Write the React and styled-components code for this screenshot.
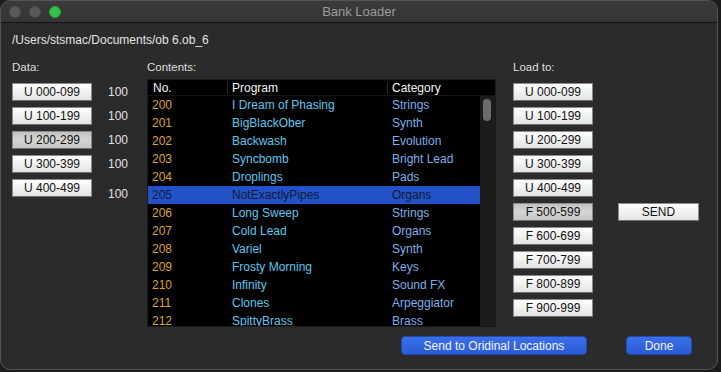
import React from "react";
import styled, { createGlobalStyle } from "styled-components";

const GlobalStyle = createGlobalStyle`
  html, body {
    margin: 0;
    padding: 0;
    background: #1c1c1c;
    font-family: "Liberation Sans", Arial, sans-serif;
  }
  * {
    box-sizing: border-box;
  }
`;

const programs = [
  ["200", "I Dream of Phasing", "Strings"],
  ["201", "BigBlackOber", "Synth"],
  ["202", "Backwash", "Evolution"],
  ["203", "Syncbomb", "Bright Lead"],
  ["204", "Droplings", "Pads"],
  ["205", "NotExactlyPipes", "Organs"],
  ["206", "Long Sweep", "Strings"],
  ["207", "Cold Lead", "Organs"],
  ["208", "Variel", "Synth"],
  ["209", "Frosty Morning", "Keys"],
  ["210", "Infinity", "Sound FX"],
  ["211", "Clones", "Arpeggiator"],
  ["212", "SpittyBrass", "Brass"],
];

const dataBanks = ["U 000-099", "U 100-199", "U 200-299", "U 300-399", "U 400-499"];
const loadBanks = [
  "U 000-099", "U 100-199", "U 200-299", "U 300-399", "U 400-499",
  "F 500-599", "F 600-699", "F 700-799", "F 800-899", "F 900-999",
];

const App = () => {
  const selected = "205";

  return (
    <>
      <GlobalStyle />
      <Window>
        <TitleBar>
          <Lights>
            <Light />
            <Light />
            <Light $green />
          </Lights>
          <Title>Bank Loader</Title>
          <span />
        </TitleBar>

        <Content>
          <Path>/Users/stsmac/Documents/ob 6.ob_6</Path>

          <Main>
            <DataColumn>
              <Label $gap={9}>Data:</Label>
              <Stack>
                {dataBanks.map((bank, i) => (
                  <DataRow key={bank}>
                    <BankButton $pressed={i === 2}>{bank}</BankButton>
                    <Count $drop={i === 4}>100</Count>
                  </DataRow>
                ))}
              </Stack>
            </DataColumn>

            <ContentsColumn>
              <Label $gap={5}>Contents:</Label>
              <List>
                <Header>
                  <HeadCell $first>No.</HeadCell>
                  <HeadCell $sep>Program</HeadCell>
                  <HeadCell $sep>Category</HeadCell>
                </Header>
                <ListBody>
                  <Rows>
                    {programs.map(([no, name, cat]) => {
                      const sel = no === selected;
                      return (
                        <Row key={no} $selected={sel}>
                          <Cell $first $color={sel ? "#0f1a33" : "#dba52f"}>{no}</Cell>
                          <Cell $color={sel ? "#0f1a33" : "#5cc7ec"}>{name}</Cell>
                          <Cell $color={sel ? "#0f1a33" : "#7eaeea"}>{cat}</Cell>
                        </Row>
                      );
                    })}
                  </Rows>
                  <ScrollTrack>
                    <ScrollThumb />
                  </ScrollTrack>
                </ListBody>
              </List>
            </ContentsColumn>

            <LoadColumn>
              <Label $gap={9}>Load to:</Label>
              <LoadGrid>
                {loadBanks.map((bank, i) => (
                  <BankButton key={bank} $pressed={i === 5} style={{ gridRow: i + 1 }}>
                    {bank}
                  </BankButton>
                ))}
                <SendButton>SEND</SendButton>
              </LoadGrid>
            </LoadColumn>
          </Main>

          <Footer>
            <BlueButton $width={186}>Send to Oridinal Locations</BlueButton>
            <BlueButton $width={66}>Done</BlueButton>
          </Footer>
        </Content>
      </Window>
    </>
  );
};

const Window = styled.div`
  width: 718px;
  height: 370px;
  background: #2b2b2b;
  border: 1px solid #555;
  border-radius: 10px;
  overflow: hidden;
  display: flex;
  flex-direction: column;
`;

const TitleBar = styled.div`
  height: 22px;
  background: linear-gradient(#3a3a3a, #353535);
  border-bottom: 1px solid #111;
  display: grid;
  grid-template-columns: 1fr auto 1fr;
  align-items: center;
`;

const Lights = styled.div`
  display: flex;
  gap: 8px;
  padding-left: 8px;
`;

const Light = styled.span`
  width: 12px;
  height: 12px;
  border-radius: 50%;
  background: ${(p) => (p.$green ? "#35c147" : "#5a5a5a")};
  border: 1px solid ${(p) => (p.$green ? "#2aa53b" : "#4d4d4d")};
`;

const Title = styled.div`
  font-size: 13px;
  color: #9b9b9b;
`;

const Content = styled.div`
  flex: 1;
  padding: 10px 0 0 11px;
  display: flex;
  flex-direction: column;
`;

const Path = styled.div`
  font-size: 12px;
  line-height: 14px;
  color: #e2e2e2;
`;

const Main = styled.div`
  display: flex;
  margin-top: 13px;
`;

const Label = styled.div`
  font-size: 11.5px;
  line-height: 14px;
  color: #dedede;
  margin-bottom: ${(p) => p.$gap}px;
`;

const DataColumn = styled.div`
  width: 135px;
  display: flex;
  flex-direction: column;
`;

const Stack = styled.div`
  display: flex;
  flex-direction: column;
  gap: 6px;
`;

const DataRow = styled.div`
  display: flex;
  align-items: flex-start;
`;

const BankButton = styled.button`
  width: 80px;
  height: 18px;
  padding: 0;
  font-family: "Liberation Sans", Arial, sans-serif;
  font-size: 12px;
  color: #111;
  border: 1px solid #8c8c8c;
  border-bottom-color: #707070;
  border-radius: 1px;
  background: ${(p) =>
    p.$pressed
      ? "linear-gradient(#c2c2c2, #d4d4d4 50%, #c6c6c6)"
      : "linear-gradient(#fdfdfd, #f1f1f1 50%, #e4e4e4)"};
  grid-column: 1;
`;

const Count = styled.span`
  font-size: 12px;
  line-height: 18px;
  color: #e2e2e2;
  margin-left: 16px;
  margin-top: ${(p) => (p.$drop ? "6px" : "0")};
`;

const ContentsColumn = styled.div`
  width: 349px;
  display: flex;
  flex-direction: column;
`;

const List = styled.div`
  height: 248px;
  background: #000;
  border: 1px solid #1a1a1a;
  display: flex;
  flex-direction: column;
  overflow: hidden;
`;

const Header = styled.div`
  height: 16px;
  flex-shrink: 0;
  display: grid;
  grid-template-columns: 79px 160px 1fr;
  align-items: center;
  border-bottom: 1px solid #161616;
`;

const HeadCell = styled.div`
  font-size: 12px;
  color: #f4f4f4;
  padding-left: ${(p) => (p.$first ? "4px" : "4px")};
  border-left: 1px solid ${(p) => (p.$sep ? "#2a2a2a" : "transparent")};
  line-height: 12px;
`;

const ListBody = styled.div`
  flex: 1;
  display: flex;
  min-height: 0;
`;

const Rows = styled.div`
  flex: 1;
  display: flex;
  flex-direction: column;
`;

const Row = styled.div`
  height: 18px;
  flex-shrink: 0;
  display: grid;
  grid-template-columns: 79px 160px 1fr;
  align-items: center;
  font-size: 12px;
  background: ${(p) => (p.$selected ? "#2352c8" : "transparent")};
`;

const Cell = styled.div`
  padding-left: ${(p) => (p.$first ? "4px" : "5px")};
  color: ${(p) => p.$color};
  white-space: nowrap;
`;

const ScrollTrack = styled.div`
  width: 15px;
  background: #1c1c1c;
  padding: 3px 0 0 3px;
`;

const ScrollThumb = styled.div`
  width: 8px;
  height: 22px;
  border-radius: 4px;
  background: #6c6c6c;
`;

const LoadColumn = styled.div`
  margin-left: 17px;
  display: flex;
  flex-direction: column;
`;

const LoadGrid = styled.div`
  display: grid;
  grid-template-columns: 80px 81px;
  column-gap: 25px;
  row-gap: 6px;
`;

const SendButton = styled(BankButton)`
  width: 81px;
  grid-column: 2;
  grid-row: 6;
`;

const Footer = styled.div`
  display: flex;
  justify-content: flex-end;
  gap: 39px;
  margin-top: 9px;
  padding-right: 25px;
`;

const BlueButton = styled.button`
  width: ${(p) => p.$width}px;
  height: 19px;
  padding: 0;
  font-family: "Liberation Sans", Arial, sans-serif;
  font-size: 12px;
  color: #f2f5ff;
  border: 1px solid #2149b4;
  border-radius: 4px;
  background: linear-gradient(#3b6fe6, #2a5bd8);
`;

export default App;
